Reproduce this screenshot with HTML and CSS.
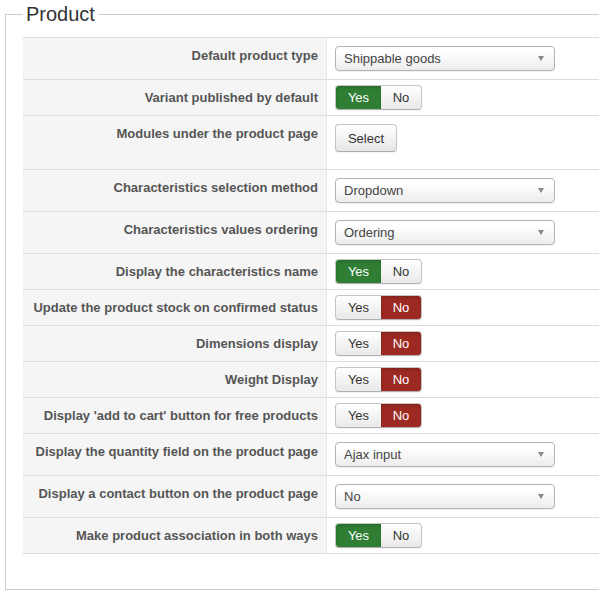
FILE: index.html
```html
<!DOCTYPE html>
<html lang="en">
<head>
<meta charset="utf-8">
<title>Product options</title>
<link rel="stylesheet" href="styles.css">
</head>
<body>
<fieldset class="panel">
  <legend class="panel-title">Product</legend>
  <div class="options">
    <div class="row">
      <div class="label">Default product type</div>
      <div class="value pad-select"><div class="dropdown"><span>Shippable goods</span><i class="caret"></i></div></div>
    </div>
    <div class="row">
      <div class="label">Variant published by default</div>
      <div class="value pad-toggle"><div class="toggle"><span class="opt yes on">Yes</span><span class="opt no">No</span></div></div>
    </div>
    <div class="row">
      <div class="label">Modules under the product page</div>
      <div class="value pad-button"><button class="btn" type="button">Select</button></div>
    </div>
    <div class="row">
      <div class="label">Characteristics selection method</div>
      <div class="value pad-select"><div class="dropdown"><span>Dropdown</span><i class="caret"></i></div></div>
    </div>
    <div class="row">
      <div class="label">Characteristics values ordering</div>
      <div class="value pad-select"><div class="dropdown"><span>Ordering</span><i class="caret"></i></div></div>
    </div>
    <div class="row">
      <div class="label">Display the characteristics name</div>
      <div class="value pad-toggle"><div class="toggle"><span class="opt yes on">Yes</span><span class="opt no">No</span></div></div>
    </div>
    <div class="row">
      <div class="label">Update the product stock on confirmed status</div>
      <div class="value pad-toggle"><div class="toggle"><span class="opt yes">Yes</span><span class="opt no on">No</span></div></div>
    </div>
    <div class="row">
      <div class="label">Dimensions display</div>
      <div class="value pad-toggle"><div class="toggle"><span class="opt yes">Yes</span><span class="opt no on">No</span></div></div>
    </div>
    <div class="row">
      <div class="label">Weight Display</div>
      <div class="value pad-toggle"><div class="toggle"><span class="opt yes">Yes</span><span class="opt no on">No</span></div></div>
    </div>
    <div class="row">
      <div class="label">Display 'add to cart' button for free products</div>
      <div class="value pad-toggle"><div class="toggle"><span class="opt yes">Yes</span><span class="opt no on">No</span></div></div>
    </div>
    <div class="row">
      <div class="label">Display the quantity field on the product page</div>
      <div class="value pad-select"><div class="dropdown"><span>Ajax input</span><i class="caret"></i></div></div>
    </div>
    <div class="row">
      <div class="label">Display a contact button on the product page</div>
      <div class="value pad-select"><div class="dropdown"><span>No</span><i class="caret"></i></div></div>
    </div>
    <div class="row last">
      <div class="label">Make product association in both ways</div>
      <div class="value pad-toggle"><div class="toggle"><span class="opt yes on">Yes</span><span class="opt no">No</span></div></div>
    </div>
  </div>
</fieldset>
</body>
</html>
```
FILE: styles.css
```css
html, body {
  margin: 0;
  padding: 0;
  background: #fff;
  overflow: hidden;
}

body {
  font-family: "Liberation Sans", Arial, sans-serif;
  font-size: 13px;
  color: #333;
}

/* the panel runs on past the right edge of the window */
.panel {
  width: 700px;
  margin: 2px 0 0 5px;
  padding: 11px 0 35px 17px;
  border: 1px solid #ccc;
  min-width: 0;
}

.panel-title {
  padding: 0 3px;
  font-size: 20px;
  line-height: 24px;
  color: #333;
  font-weight: normal;
}

.options {
  display: flex;
  flex-direction: column;
}

.row {
  display: grid;
  grid-template-columns: 304px 1fr;
  border-top: 1px solid #ddd;
}

.row.last {
  border-bottom: 1px solid #ddd;
}

.label {
  background: #f5f5f5;
  border-right: 1px solid #e6e6e6;
  padding: 9px 8px 0 0;
  line-height: 18px;
  font-weight: bold;
  color: #555;
  text-align: right;
  white-space: nowrap;
}

.value {
  padding-left: 8px;
}

.pad-select { padding-top: 8px; padding-bottom: 8px; }
.pad-toggle { padding-top: 5px; padding-bottom: 5px; }
.pad-button { padding-top: 8px; padding-bottom: 17px; }

/* select box */
.dropdown {
  box-sizing: border-box;
  width: 220px;
  height: 25px;
  display: flex;
  align-items: center;
  justify-content: space-between;
  padding: 0 10px 0 8px;
  border: 1px solid #b3b3b3;
  border-radius: 4px;
  background: linear-gradient(#ffffff 20%, #ececec 100%);
  box-shadow: 0 1px 1px rgba(0, 0, 0, 0.06);
  color: #444;
  font-size: 13px;
}

.caret {
  width: 0;
  height: 0;
  border-left: 3.5px solid transparent;
  border-right: 3.5px solid transparent;
  border-top: 5px solid #888;
}

/* yes / no switch */
.toggle {
  display: inline-flex;
  height: 25px;
  box-sizing: border-box;
  border: 1px solid #c4c4c4;
  border-bottom-color: #b0b0b0;
  border-radius: 4px;
  overflow: hidden;
  background: linear-gradient(#ffffff, #e9e9e9);
  box-shadow: 0 1px 1px rgba(0, 0, 0, 0.05);
}

.opt {
  display: flex;
  align-items: center;
  justify-content: center;
  line-height: 23px;
  font-size: 13px;
  color: #333;
}

.opt.yes { width: 45px; }
.opt.no { width: 40px; }

.opt.yes.on {
  background: #2f7e33;
  color: #fff;
  box-shadow: inset 0 2px 3px rgba(0, 0, 0, 0.15);
}

.opt.no.on {
  background: #9c2a22;
  color: #fff;
  box-shadow: inset 0 2px 3px rgba(0, 0, 0, 0.15);
}

/* plain button */
.btn {
  box-sizing: border-box;
  height: 28px;
  width: 62px;
  padding: 0;
  font-family: "Liberation Sans", Arial, sans-serif;
  font-size: 13px;
  color: #333;
  border: 1px solid #c4c4c4;
  border-bottom-color: #aaa;
  border-radius: 4px;
  background: linear-gradient(#ffffff, #e6e6e6);
  box-shadow: 0 1px 2px rgba(0, 0, 0, 0.06);
}
```
